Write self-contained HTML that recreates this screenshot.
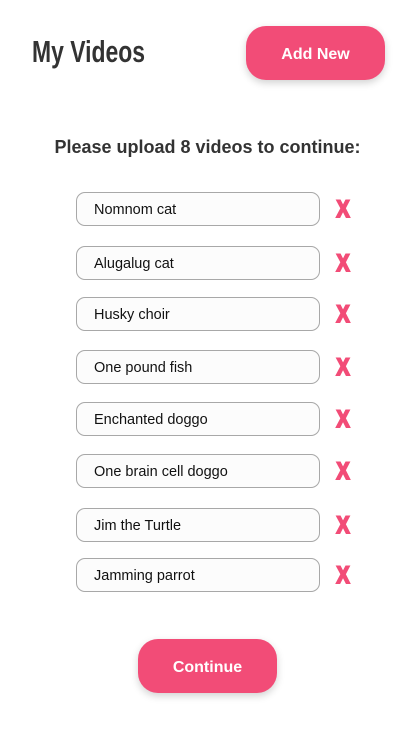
<!DOCTYPE html>
<html><head><style>
body{margin:0;width:415px;height:736px;background:#fff;position:relative;overflow:hidden;font-family:"Liberation Sans",sans-serif;}
.t{position:absolute;left:32px;top:34px;font-size:31px;font-weight:bold;color:#333;font-family:"Liberation Sans Narrow","Liberation Sans",sans-serif;transform:scaleX(0.74);transform-origin:left;}
.btn{position:absolute;background:#f24c77;color:#fff;font-weight:bold;font-size:16px;border-radius:20px;display:flex;align-items:center;justify-content:center;box-shadow:0 3px 8px rgba(0,0,0,0.18);padding-top:3px;box-sizing:border-box;}
.h{position:absolute;left:0;width:415px;top:137px;text-align:center;font-size:18px;font-weight:bold;color:#333;}
.row{position:absolute;left:76px;width:242px;height:32px;border:1px solid #a8a8a8;border-radius:9px;background:#fcfcfc;}
.row span{position:absolute;left:17px;top:9px;font-size:14.5px;color:#111;}
.x{position:absolute;left:334px;font-size:27px;font-weight:bold;color:#f24c77;font-family:"Liberation Sans Narrow","Liberation Sans",sans-serif;transform:scaleX(0.8);text-shadow:1px 0 0 #f24c77,-1px 0 0 #f24c77;}
</style></head><body>
<div class="t">My Videos</div>
<div class="btn" style="left:246px;top:26px;width:139px;height:54px;">Add New</div>
<div class="h">Please upload 8 videos to continue:</div>
<div class="row" style="top:192px"><span>Nomnom cat</span></div><div class="x" style="top:194px">X</div>
<div class="row" style="top:246px"><span>Alugalug cat</span></div><div class="x" style="top:248px">X</div>
<div class="row" style="top:297px"><span>Husky choir</span></div><div class="x" style="top:299px">X</div>
<div class="row" style="top:350px"><span>One pound fish</span></div><div class="x" style="top:352px">X</div>
<div class="row" style="top:402px"><span>Enchanted doggo</span></div><div class="x" style="top:404px">X</div>
<div class="row" style="top:454px"><span>One brain cell doggo</span></div><div class="x" style="top:456px">X</div>
<div class="row" style="top:508px"><span>Jim the Turtle</span></div><div class="x" style="top:510px">X</div>
<div class="row" style="top:558px"><span>Jamming parrot</span></div><div class="x" style="top:560px">X</div>
<div class="btn" style="left:138px;top:639px;width:139px;height:54px;">Continue</div>
</body></html>
